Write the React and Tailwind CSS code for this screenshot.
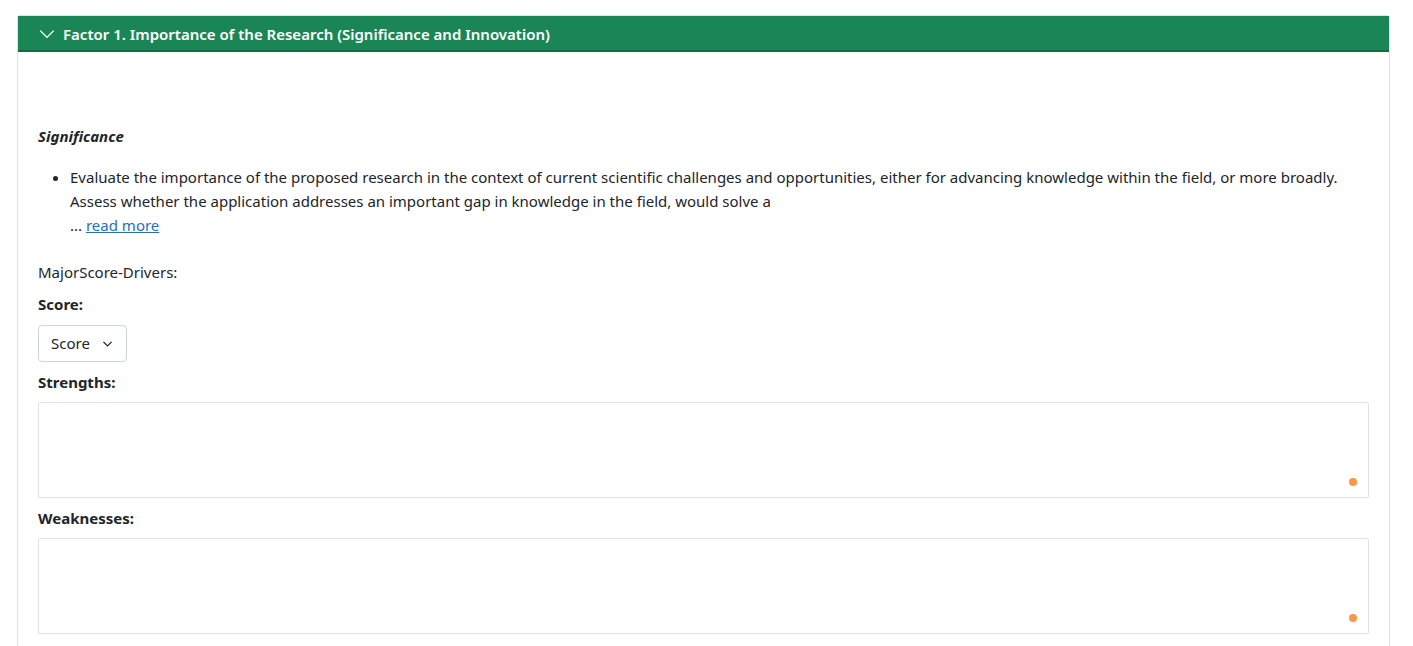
const ResizeDot = () => (
  <span className="absolute right-[12px] bottom-[12px] w-[8px] h-[8px] rounded-full bg-[#fd9645]" />
);

const Field = ({ label, children }) => (
  <div>
    <div className="font-bold leading-6 mb-2">{label}</div>
    {children}
  </div>
);

const ReviewBox = () => (
  <div className="relative">
    <textarea className="block w-full h-[96px] border border-[#dee2e6] rounded-[2px] resize-none outline-none p-2" />
    <ResizeDot />
  </div>
);

export default function App() {
  return (
    <div className="min-h-screen bg-white pt-[15px] px-[17px] text-[15px] text-[#212529] font-['Noto_Sans',sans-serif]">
      <div className="border border-[#dee2e6] rounded-t-[3px] w-[1373px]">
        {/* header */}
        <div className="flex items-center gap-[7px] h-[36px] pt-[1px] bg-[#1b8655] border-b-2 border-[#146b43] pl-[20px] text-white font-semibold">
          <svg width="18" height="18" viewBox="0 0 16 16" fill="none" stroke="currentColor" strokeWidth="1.2">
            <path d="M2 5l6 6 6-6" />
          </svg>
          <span className="leading-6">Factor 1. Importance of the Research (Significance and Innovation)</span>
        </div>

        {/* body */}
        <div className="px-[20px] pt-[72px] pb-[30px]">
          <div className="font-bold italic leading-6">Significance</div>
          <ul className="list-disc pl-[32px] mt-[17px] leading-6">
            <li>
              Evaluate the importance of the proposed research in the context of current scientific challenges and opportunities, either for advancing knowledge within the field, or more broadly. Assess whether the application addresses an important gap in knowledge in the field, would solve a
              <br />
              ... <a href="#" className="text-[#2a6fb5] underline">read more</a>
            </li>
          </ul>

          <div className="flex flex-col gap-[8px] mt-[23px]">
            <div className="leading-6">MajorScore-Drivers:</div>
            <div>
              <div className="font-bold leading-6 mb-[9px]">Score:</div>
              <button className="flex items-center gap-[11px] h-[37px] px-[12px] border border-[#ced4da] rounded-[4px] bg-white">
                Score
                <svg width="13" height="13" viewBox="0 0 16 16" fill="none" stroke="currentColor" strokeWidth="1.6">
                  <path d="M3 6l5 5 5-5" />
                </svg>
              </button>
            </div>
            <Field label="Strengths:">
              <ReviewBox />
            </Field>
            <Field label="Weaknesses:">
              <ReviewBox />
            </Field>
          </div>
        </div>
      </div>
    </div>
  );
}
